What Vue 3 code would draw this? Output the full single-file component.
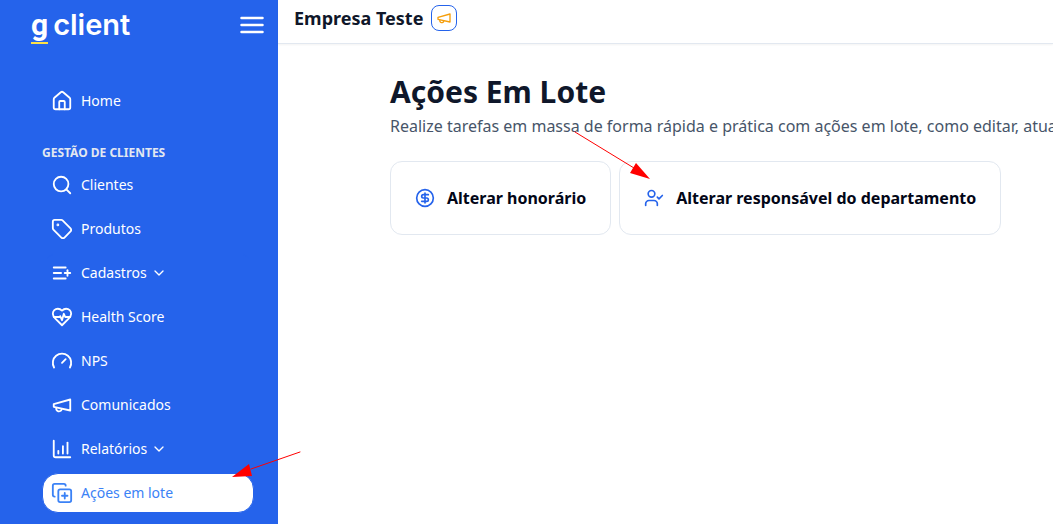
<script setup>
const icons = {
  home: '<path d="M15 21v-8a1 1 0 0 0-1-1h-4a1 1 0 0 0-1 1v8"/><path d="M3 10a2 2 0 0 1 .709-1.528l7-5.999a2 2 0 0 1 2.582 0l7 5.999A2 2 0 0 1 21 10v9a2 2 0 0 1-2 2H5a2 2 0 0 1-2-2z"/>',
  search: '<circle cx="11" cy="11" r="8"/><path d="m21 21-4.3-4.3"/>',
  tag: '<path d="M12.6 2.6A2 2 0 0 0 11.2 2H4a2 2 0 0 0-2 2v7.2a2 2 0 0 0 .6 1.4l8.7 8.7a2.4 2.4 0 0 0 3.4 0l6.6-6.6a2.4 2.4 0 0 0 0-3.4z"/><circle cx="7.5" cy="7.5" r=".5" fill="currentColor"/>',
  list: '<path d="M11 12H3"/><path d="M16 6H3"/><path d="M16 18H3"/><path d="M18 9v6"/><path d="M21 12h-6"/>',
  heart: '<path d="M19 14c1.49-1.46 3-3.21 3-5.5A5.5 5.5 0 0 0 16.5 3c-1.76 0-3 .5-4.5 2-1.5-1.5-2.74-2-4.5-2A5.5 5.5 0 0 0 2 8.500c0 2.3 1.5 4.05 3 5.5l7 7Z"/><path d="M3.220 12H9.500l.5-1 2 4.500 2-7 1.500 3.500h5.270"/>',
  gauge: '<path d="m12 14 4-4"/><path d="M3.340 19a10 10 0 1 1 17.320 0"/>',
  megaphone: '<path d="m3 11 18-5v12L3 14v-3z"/><path d="M11.600 16.800a3 3 0 1 1-5.800-1.600"/>',
  chart: '<path d="M3 3v16a2 2 0 0 0 2 2h16"/><path d="M18 17V5"/><path d="M13 17V9"/><path d="M8 17v-3"/>',
  copy: '<path d="M15 12v6"/><path d="M12 15h6"/><rect width="14" height="14" x="8" y="8" rx="2"/><path d="M4 16c-1.100 0-2-.9-2-2V4c0-1.100.9-2 2-2h10c1.100 0 2 .9 2 2"/>',
  dollar: '<circle cx="12" cy="12" r="10"/><path d="M16 8h-6a2 2 0 1 0 0 4h4a2 2 0 1 1 0 4H8"/><path d="M12 18V6"/>',
  userCheck: '<path d="m16 11 2 2 4-4"/><path d="M16 21v-2a4 4 0 0 0-4-4H6a4 4 0 0 0-4 4v2"/><circle cx="9" cy="7" r="4"/>',
}

const clientItems = [
  { label: 'Clientes', icon: 'search' },
  { label: 'Produtos', icon: 'tag' },
  { label: 'Cadastros', icon: 'list', expandable: true },
  { label: 'Health Score', icon: 'heart' },
  { label: 'NPS', icon: 'gauge' },
  { label: 'Comunicados', icon: 'megaphone' },
  { label: 'Relatórios', icon: 'chart', expandable: true },
  { label: 'Ações em lote', icon: 'copy', active: true },
]

const actions = [
  { label: 'Alterar honorário', icon: 'dollar' },
  { label: 'Alterar responsável do departamento', icon: 'userCheck' },
]
</script>

<template>
  <div class="app">
    <aside class="sidebar">
      <div class="brand-row">
        <a class="brand" href="#" aria-label="g client"><span class="brand-g">g</span><span class="brand-name">client</span></a>
        <button class="menu-button" type="button" aria-label="Menu">
          <svg viewBox="0 0 24 18"><path d="M1.500 2h21M1.500 9h21M1.500 16h21" /></svg>
        </button>
      </div>
      <nav class="nav">
        <a class="nav-item" href="#">
          <svg class="icon" viewBox="0 0 24 24" v-html="icons.home"></svg>
          <span>Home</span>
        </a>
        <h2 class="nav-heading">GESTÃO DE CLIENTES</h2>
        <ul class="nav-list">
          <li v-for="item in clientItems" :key="item.label">
            <component
              :is="item.expandable ? 'button' : 'a'"
              class="nav-item"
              :class="{ active: item.active }"
              :href="item.expandable ? undefined : '#'"
              :type="item.expandable ? 'button' : undefined"
              :aria-expanded="item.expandable ? 'false' : undefined"
              :aria-current="item.active ? 'page' : undefined"
            >
              <svg class="icon" viewBox="0 0 24 24" v-html="icons[item.icon]"></svg>
              <span>{{ item.label }}</span>
              <svg v-if="item.expandable" class="chevron" viewBox="0 0 24 24"><path d="m6 9 6 6 6-6" /></svg>
            </component>
          </li>
        </ul>
      </nav>
    </aside>

    <div class="content">
      <header class="topbar">
        <strong class="company">Empresa Teste</strong>
        <button class="news-button" type="button" aria-label="Novidades">
          <svg viewBox="0 0 24 24" v-html="icons.megaphone"></svg>
        </button>
      </header>
      <main class="main">
        <h1>Ações Em Lote</h1>
        <p class="intro">Realize tarefas em massa de forma rápida e prática com ações em lote, como editar, atualizar</p>
        <div class="cards">
          <button v-for="action in actions" :key="action.label" class="card" type="button">
            <svg viewBox="0 0 24 24" v-html="icons[action.icon]"></svg>
            <span>{{ action.label }}</span>
          </button>
        </div>
      </main>
    </div>

    <svg class="arrow arrow-menu" viewBox="0 0 70 28" aria-hidden="true">
      <path class="shaft" d="M68 1 19 18" /><path class="head" d="M0 26 17 13 20 25Z" />
    </svg>
    <svg class="arrow arrow-card" viewBox="0 0 76 48" aria-hidden="true">
      <path class="shaft" d="M1 1 60 37" /><path class="head" d="M76 48 62 32 56 42Z" />
    </svg>
  </div>
</template>

<style>
body {
  overflow: hidden;
}
</style>

<style scoped>
.app {
  position: relative;
  display: flex;
  min-height: 100vh;
  background: #fff;
  font-family: "Noto Sans", "Open Sans", sans-serif;
  color: #0f172a;
}
* {
  box-sizing: border-box;
}
button {
  font: inherit;
  color: inherit;
  cursor: pointer;
}
a {
  color: inherit;
  text-decoration: none;
}
svg {
  display: block;
  flex: none;
  fill: none;
  stroke: currentColor;
  stroke-width: 2;
  stroke-linecap: round;
  stroke-linejoin: round;
}
.sidebar {
  flex: 0 0 278px;
  background: #2563eb;
  color: #fff;
}
.brand-row {
  display: flex;
  justify-content: space-between;
  align-items: flex-start;
  height: 81px;
  padding: 8px 14px 0 31px;
}
.brand {
  display: flex;
  gap: 5px;
  font-family: Roboto, sans-serif;
  font-size: 30px;
  font-weight: 700;
  line-height: 34px;
}
.brand-g {
  height: 36px;
  border-bottom: 2px solid #fde047;
}
.brand-name {
  font-family: Inter, sans-serif;
  font-size: 29px;
  font-weight: 600;
}
.menu-button {
  margin-top: 8px;
  padding: 0;
  border: 0;
  background: none;
}
.menu-button svg {
  width: 24px;
  height: 18px;
}
.menu-button path {
  stroke-width: 2.500;
}
.nav {
  padding: 0 24px 0 42px;
}
.nav-item {
  display: flex;
  align-items: center;
  gap: 8px;
  width: 100%;
  height: 40px;
  padding: 0 8px;
  border: 1px solid #2563eb;
  border-radius: 16px;
  background: none;
  font-size: 14px;
  line-height: 20px;
}
.nav-item.active {
  background: #fff;
  color: #3b82f6;
}
.icon {
  width: 22px;
  height: 22px;
}
.chevron {
  width: 16px;
  height: 16px;
  margin-left: -4px;
}
.nav-heading {
  margin: 24px 0 4px;
  color: #e2e8f0;
  font-size: 12px;
  font-weight: 700;
  line-height: 16px;
}
.nav-list {
  display: grid;
  gap: 4px;
  margin: 0;
  padding: 0;
  list-style: none;
}
.content {
  flex: 1;
  min-width: 0;
}
.topbar {
  display: flex;
  align-items: center;
  gap: 8px;
  height: 44px;
  padding: 0 16px 8px;
  border-bottom: 1px solid #e2e8f0;
  box-shadow: 0 1px 2px #0000000d;
}
.company {
  font-size: 18px;
  font-weight: 700;
  line-height: 28px;
}
.news-button {
  display: grid;
  place-items: center;
  width: 26px;
  height: 26px;
  padding: 0;
  border: 1px solid #2563eb;
  border-radius: 8px;
  background: #fff;
  color: #f59e0b;
}
.news-button svg {
  width: 16px;
  height: 16px;
}
.main {
  padding: 30px 0 0 112px;
}
h1 {
  margin: 0;
  font-size: 30px;
  font-weight: 700;
  line-height: 36px;
}
.intro {
  margin: 4px 0 23px;
  color: #475569;
  font-size: 16px;
  line-height: 24px;
  white-space: nowrap;
}
.cards {
  display: flex;
  gap: 8px;
}
.card {
  display: flex;
  align-items: center;
  gap: 12px;
  padding: 24px;
  border: 1px solid #e2e8f0;
  border-radius: 12px;
  background: #fff;
  color: #020617;
  font-size: 16px;
  font-weight: 700;
  line-height: 24px;
  white-space: nowrap;
}
.card svg {
  width: 20px;
  height: 20px;
  color: #2563eb;
}
.arrow {
  position: absolute;
  pointer-events: none;
}
.arrow .shaft {
  stroke: #f00;
  stroke-width: 1;
}
.arrow .head {
  fill: #f00;
  stroke: none;
}
.arrow-menu {
  left: 232px;
  top: 451px;
  width: 70px;
  height: 28px;
}
.arrow-card {
  left: 574px;
  top: 131px;
  width: 76px;
  height: 48px;
}
</style>
